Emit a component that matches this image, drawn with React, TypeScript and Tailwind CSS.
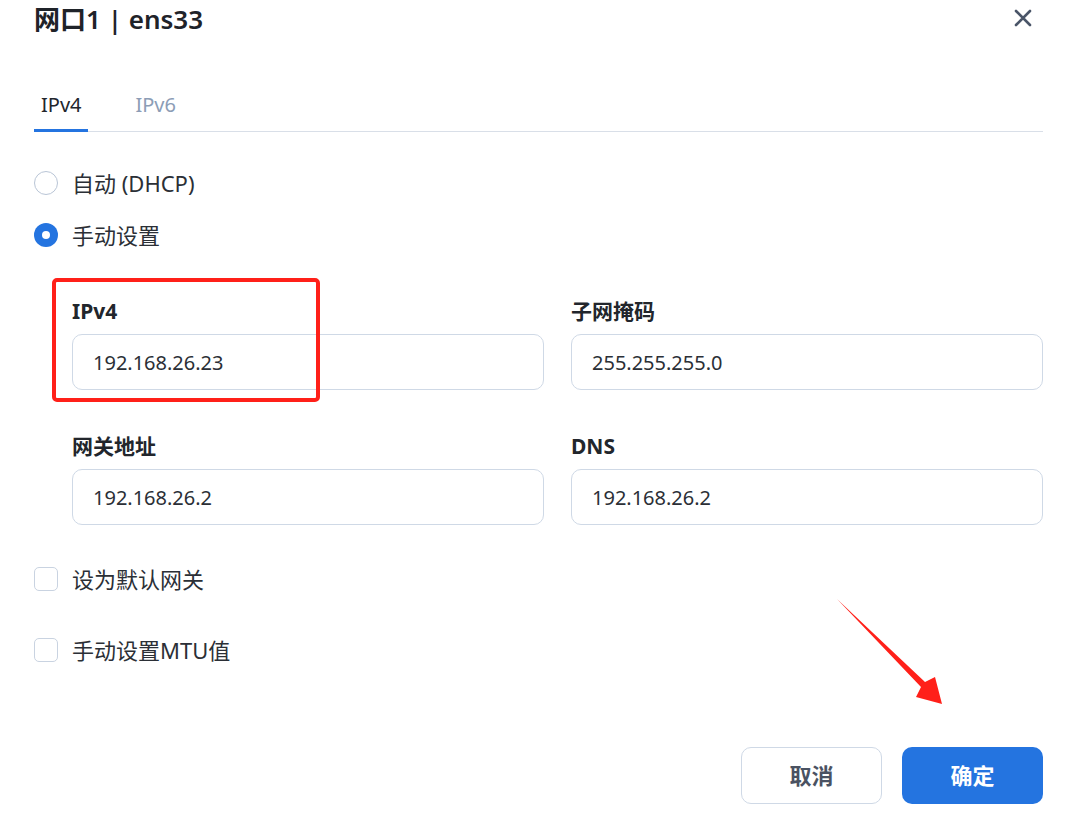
import React from "react";

const font = { fontFamily: '"Noto Sans", "Noto Sans CJK SC", sans-serif' };

function Radio({ checked, label }: { checked?: boolean; label: string }) {
  return (
    <label className="flex items-center h-[28px] gap-[14px] text-[22px] leading-[28px] text-[#2b2f36]">
      {checked ? (
        <span className="w-[24px] h-[24px] rounded-full bg-[#2474e0] flex items-center justify-center">
          <span className="w-[8px] h-[8px] rounded-full bg-white" />
        </span>
      ) : (
        <span className="w-[24px] h-[24px] rounded-full border-[1.5px] border-[#b9c5d6] bg-white" />
      )}
      <span>{label}</span>
    </label>
  );
}

function Check({ label }: { label: string }) {
  return (
    <label className="flex items-center h-[28px] gap-[14px] text-[22px] leading-[28px] text-[#2b2f36]">
      <span className="w-[24px] h-[24px] rounded-[5px] border-[1.5px] border-[#c9d3e1] bg-white" />
      <span>{label}</span>
    </label>
  );
}

function Field({ label, value }: { label: string; value: string }) {
  return (
    <div className="flex flex-col">
      <div className="text-[21px] leading-[26px] font-bold text-[#22262c] mb-[10px]">{label}</div>
      <div className="h-[56px] rounded-[10px] border border-[#cfd9e6] flex items-center px-[20px] pt-[2px] text-[20px] text-[#2b2f36]">
        {value}
      </div>
    </div>
  );
}

export default function App() {
  return (
    <div className="relative w-[1079px] h-[837px] bg-white pl-[34px] pr-[36px]" style={font}>
      <div className="h-[37px] flex items-center justify-between">
        <h1 className="text-[26px] leading-[36px] font-semibold text-[#1f2329]">网口1 | ens33</h1>
        <svg width="18" height="18" viewBox="0 0 18 18" className="mr-[11px] mt-[-2px]">
          <path d="M2 2 L16 16 M16 2 L2 16" stroke="#4a5568" strokeWidth="2.6" strokeLinecap="round" />
        </svg>
      </div>

      <div className="mt-[55px] flex gap-[47px] border-b border-[#d9dfe8]">
        <div className="px-[7px] pb-[11px] border-b-[3px] border-[#2474e0] -mb-px text-[20px] leading-[26px] text-[#22262c]">
          IPv4
        </div>
        <div className="pb-[11px] border-b-[3px] border-transparent -mb-px text-[20px] leading-[26px] text-[#8c9db6]">
          IPv6
        </div>
      </div>

      <div className="mt-[37px] flex flex-col gap-[24px]">
        <Radio label="自动 (DHCP)" />
        <Radio checked label="手动设置" />
      </div>

      <div className="mt-[49px] ml-[38px] grid grid-cols-2 gap-x-[27px] gap-y-[43px]">
        <Field label="IPv4" value="192.168.26.23" />
        <Field label="子网掩码" value="255.255.255.0" />
        <Field label="网关地址" value="192.168.26.2" />
        <Field label="DNS" value="192.168.26.2" />
      </div>

      <div className="mt-[40px] flex flex-col gap-[43px]">
        <Check label="设为默认网关" />
        <Check label="手动设置MTU值" />
      </div>

      <div className="mt-[83px] flex justify-end gap-[20px]">
        <button className="w-[141px] h-[57px] rounded-[10px] border border-[#cfd9e6] bg-white text-[22px] font-bold text-[#4a5262]">
          取消
        </button>
        <button className="w-[141px] h-[57px] rounded-[10px] bg-[#2474e0] text-[22px] font-bold text-white">
          确定
        </button>
      </div>

      {/* annotations */}
      <div className="absolute left-[52px] top-[278px] w-[268px] h-[124px] border-[4px] border-[#ff2019] rounded-[5px] pointer-events-none" />
      <svg className="absolute left-0 top-0 pointer-events-none" width="1079" height="837">
        <polygon
          points="837,599 925,682 935,677 942,704 916,697 921,687"
          fill="#ff2019"
        />
      </svg>
    </div>
  );
}
